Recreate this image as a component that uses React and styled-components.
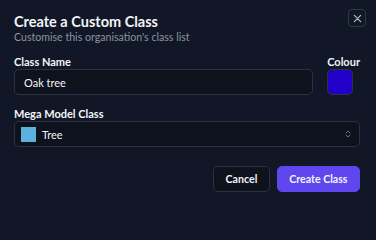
import React from "react";
import styled, { createGlobalStyle } from "styled-components";

const Global = createGlobalStyle`
  html, body { margin: 0; padding: 0; background: #111726; }
  body { font-family: "Lato", "Noto Sans", sans-serif; color: #f3f4f6; }
  * { box-sizing: border-box; }
`;

const Dialog = styled.div`
  position: relative;
  width: 376px;
  height: 209px;
  background: #111726;
  padding: 13px 16px 0 14px;
  display: flex;
  flex-direction: column;
`;

const Header = styled.div`
  display: flex;
  flex-direction: column;
`;

const Title = styled.h2`
  margin: 0;
  font-size: 14.5px;
  line-height: 17px;
  font-weight: 700;
  color: #f3f4f6;
`;

const Subtitle = styled.p`
  margin: 0;
  font-size: 10.6px;
  line-height: 14px;
  color: #8b93a1;
`;

const CloseButton = styled.button`
  position: absolute;
  top: 9px;
  left: 348px;
  width: 18px;
  height: 18px;
  padding: 0;
  border: 1px solid #2f3745;
  border-radius: 4px;
  background: transparent;
  color: #b8bec9;
  display: flex;
  align-items: center;
  justify-content: center;
`;

const Row = styled.div`
  display: grid;
  grid-template-columns: 1fr auto;
  column-gap: 14px;
  margin-top: ${(p) => p.$mt || 0}px;
`;

const Field = styled.div`
  display: flex;
  flex-direction: column;
  gap: 1px;
  margin-top: ${(p) => p.$mt || 0}px;
`;

const Label = styled.label`
  font-size: 11px;
  line-height: 13px;
  font-weight: 700;
  color: #f3f4f6;
`;

const Input = styled.div`
  height: 26px;
  border: 1px solid #2b3342;
  border-radius: 5px;
  background: #0d121c;
  display: flex;
  align-items: center;
  padding: 0 9px;
  font-size: 11px;
  color: #f3f4f6;
  gap: 6px;
`;

const ColourSwatch = styled.div`
  width: 26px;
  height: 26px;
  border-radius: 5px;
  border: 1px solid #2b3342;
  background: ${(p) => p.$color};
`;

const SelectBox = styled(Input)`
  padding: 0 8px 0 6px;
`;

const SmallSwatch = styled.span`
  width: 15px;
  height: 15px;
  background: ${(p) => p.$color};
  flex: none;
`;

const SelectText = styled.span`
  flex: 1;
`;

const Footer = styled.div`
  display: flex;
  justify-content: flex-end;
  gap: 7px;
  margin-top: 19px;
`;

const Button = styled.button`
  height: 26px;
  padding: 0 11.5px;
  border-radius: 5px;
  font-family: inherit;
  font-size: 10.6px;
  font-weight: 700;
  color: #f3f4f6;
  border: 1px solid ${(p) => (p.$primary ? "#5f46ee" : "#2b3342")};
  background: ${(p) => (p.$primary ? "#5f46ee" : "#0d121c")};
`;

export default function App() {
  return (
    <>
      <Global />
      <Dialog>
        <Header>
          <Title>Create a Custom Class</Title>
          <Subtitle>Customise this organisation's class list</Subtitle>
        </Header>
        <CloseButton aria-label="Close">
          <svg width="9" height="9" viewBox="0 0 10 10" fill="none" stroke="currentColor" strokeWidth="1.3" strokeLinecap="round">
            <path d="M1.5 1.5l7 7M8.5 1.5l-7 7" />
          </svg>
        </CloseButton>
        <Row $mt={11}>
          <Field>
            <Label>Class Name</Label>
            <Input>Oak tree</Input>
          </Field>
          <Field>
            <Label>Colour</Label>
            <ColourSwatch $color="#2200c8" />
          </Field>
        </Row>
        <Field $mt={12}>
          <Label>Mega Model Class</Label>
          <SelectBox>
            <SmallSwatch $color="#5bb3dd" />
            <SelectText>Tree</SelectText>
            <svg width="6" height="8" viewBox="0 0 6 8" fill="none" stroke="#6b7280" strokeWidth="1" strokeLinecap="round" strokeLinejoin="round">
              <path d="M1 3l2-2 2 2M1 5l2 2 2-2" />
            </svg>
          </SelectBox>
        </Field>
        <Footer>
          <Button>Cancel</Button>
          <Button $primary>Create Class</Button>
        </Footer>
      </Dialog>
    </>
  );
}
